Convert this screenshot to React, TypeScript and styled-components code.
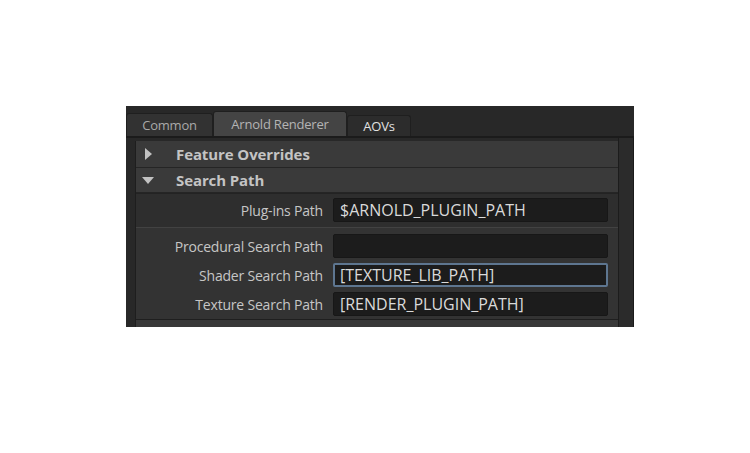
import React from "react";
import styled, { createGlobalStyle } from "styled-components";

const GlobalStyle = createGlobalStyle`
  html, body {
    margin: 0;
    padding: 0;
    background: #ffffff;
  }
  body {
    font-family: "Open Sans", "Liberation Sans", sans-serif;
  }
`;

const Page = styled.div`
  width: 750px;
  height: 453px;
  padding: 106px 0 0 126px;
  box-sizing: border-box;
`;

const Panel = styled.div`
  width: 508px;
  height: 221px;
  background: #282828;
  display: flex;
  flex-direction: column;
  overflow: hidden;
`;

const TabBar = styled.div`
  height: 30px;
  display: flex;
  align-items: flex-end;
  border-bottom: 2px solid #1b1b1b;
  flex-shrink: 0;
`;

const Tab = styled.div<{ $height: number; $bg: string; $color: string; $width: number }>`
  width: ${(p) => p.$width}px;
  height: ${(p) => p.$height}px;
  background: ${(p) => p.$bg};
  color: ${(p) => p.$color};
  border: 1px solid #1f1f1f;
  border-bottom: 0;
  border-radius: 3px 3px 0 0;
  box-sizing: border-box;
  display: flex;
  align-items: center;
  justify-content: center;
  font-size: 13px;
  letter-spacing: -0.2px;
`;

const Body = styled.div`
  flex: 1;
  display: flex;
  min-height: 0;
`;

const Content = styled.div`
  flex: 1;
  padding: 3px 0 0 9px;
  display: flex;
  flex-direction: column;
`;

const Frame = styled.div`
  flex: 1;
  border-left: 1px solid #1e1e1e;
  display: flex;
  flex-direction: column;
`;

const Scrollbar = styled.div`
  width: 16px;
  background: #2b2b2b;
  border-left: 1px solid #1c1c1c;
  border-right: 1px solid #1a1a1a;
  box-sizing: border-box;
`;

const Header = styled.div<{ $height: number }>`
  height: ${(p) => p.$height}px;
  box-sizing: border-box;
  background: #3a3a3a;
  border-bottom: 1px solid #252525;
  display: flex;
  align-items: center;
  color: #c4c4c4;
  font-size: 15px;
  font-weight: 700;
  letter-spacing: -0.1px;
  flex-shrink: 0;
`;

const Arrow = styled.span`
  width: 40px;
  display: flex;
  align-items: center;
  padding-left: 9px;
  box-sizing: border-box;
`;

const PlugFrame = styled.div`
  background: #2e2e2e;
  border-top: 1px solid #232323;
  border-bottom: 1px solid #424242;
  padding: 4px 0 5px;
  flex-shrink: 0;
`;

const Section = styled.div`
  background: #333333;
  padding: 6px 0 3px;
  display: flex;
  flex-direction: column;
  gap: 5px;
  border-bottom: 1px solid #1f1f1f;
  flex-shrink: 0;
`;

const Row = styled.div`
  display: grid;
  grid-template-columns: 187px 275px;
  column-gap: 10px;
  align-items: center;
`;

const Label = styled.div`
  text-align: right;
  color: #c6c6c6;
  font-size: 14px;
  letter-spacing: -0.2px;
`;

const Field = styled.div<{ $focus?: boolean }>`
  height: 24px;
  box-sizing: border-box;
  background: #1c1c1c;
  border: ${(p) => (p.$focus ? "2px solid #5e7690" : "1px solid #171717")};
  border-radius: 2px;
  padding-left: ${(p) => (p.$focus ? 5 : 6)}px;
  display: flex;
  align-items: center;
  color: #dadada;
  font-size: 16px;
  white-space: nowrap;
`;

const NextHeader = styled.div`
  flex: 1;
  background: #383838;
`;

const RightArrow = () => (
  <svg width="7" height="12" viewBox="0 0 7 12">
    <path d="M0 0 L7 6 L0 12 Z" fill="#c2c2c2" />
  </svg>
);

const DownArrow = () => (
  <svg width="12" height="7" viewBox="0 0 12 7" style={{ marginLeft: -3 }}>
    <path d="M0 0 L12 0 L6 7 Z" fill="#c2c2c2" />
  </svg>
);

const rows = [
  { label: "Procedural Search Path", value: "" },
  { label: "Shader Search Path", value: "[TEXTURE_LIB_PATH]", focus: true },
  { label: "Texture Search Path", value: "[RENDER_PLUGIN_PATH]" },
];

const App = () => {
  return (
    <>
      <GlobalStyle />
      <Page>
        <Panel>
          <TabBar>
            <Tab $width={87} $height={23} $bg="#323232" $color="#a9a9a9">
              Common
            </Tab>
            <Tab $width={134} $height={25} $bg="#444444" $color="#b4b4b4">
              Arnold Renderer
            </Tab>
            <Tab $width={64} $height={21} $bg="#2c2c2c" $color="#e2e2e2">
              AOVs
            </Tab>
          </TabBar>
          <Body>
            <Content>
              <Frame>
                <Header $height={27}>
                  <Arrow>
                    <RightArrow />
                  </Arrow>
                  Feature Overrides
                </Header>
                <Header $height={25}>
                  <Arrow>
                    <DownArrow />
                  </Arrow>
                  Search Path
                </Header>
                <PlugFrame>
                  <Row>
                    <Label>Plug-ins Path</Label>
                    <Field>$ARNOLD_PLUGIN_PATH</Field>
                  </Row>
                </PlugFrame>
                <Section>
                  {rows.map((r) => (
                    <Row key={r.label}>
                      <Label>{r.label}</Label>
                      <Field $focus={r.focus}>{r.value}</Field>
                    </Row>
                  ))}
                </Section>
                <NextHeader />
              </Frame>
            </Content>
            <Scrollbar />
          </Body>
        </Panel>
      </Page>
    </>
  );
};

export default App;
